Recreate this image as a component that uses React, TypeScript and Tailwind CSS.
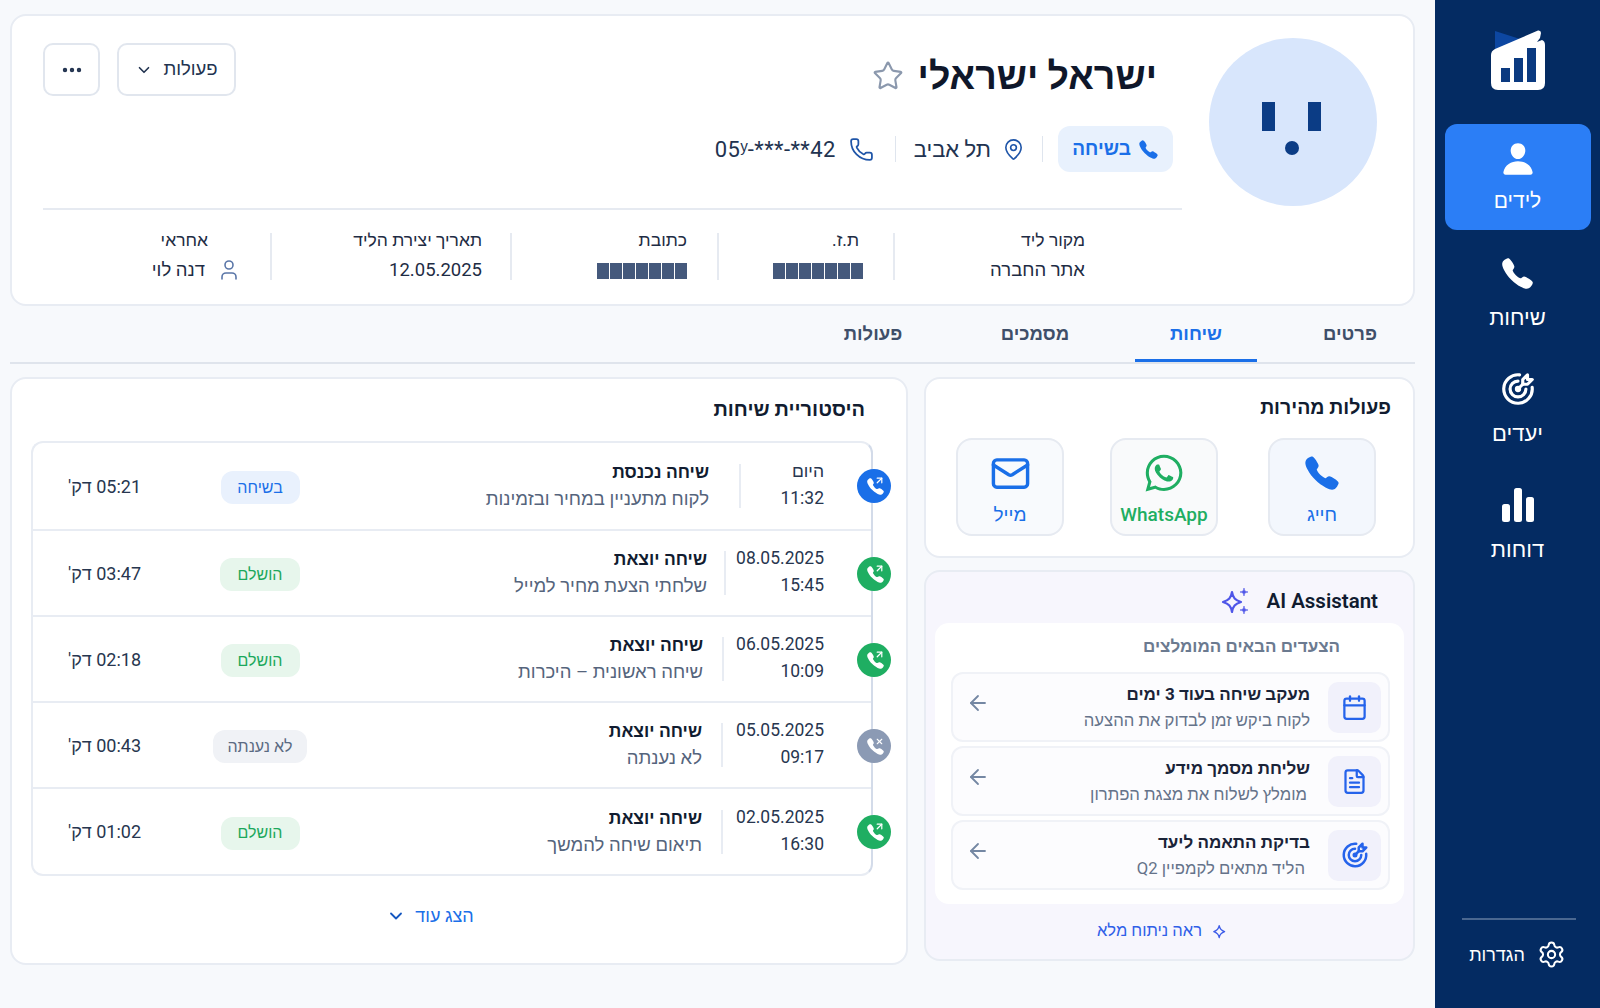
import React from "react";
import { Star, MapPin, Phone, User, ChevronDown, Ellipsis, Settings, ArrowLeft, Calendar, FileText, Mail, ArrowUpRight, X } from "lucide-react";
import { IoCall, IoPerson } from "react-icons/io5";
import { FaWhatsapp } from "react-icons/fa";
import { TbTargetArrow } from "react-icons/tb";

const font = "font-['Roboto','Liberation_Sans',sans-serif]";

function Logo() {
  return (
    <svg width="54" height="60" viewBox="0 0 54 60">
      <path d="M4 1 L29 9 L4 21 Z" fill="#0d47a1" />
      <path d="M0 25 Q0 21 4 19 L47 0.5 Q50 0 50 3 L49 8 L46 12 L51 10 Q54 11 54 15 L54 53 Q54 60 47 60 L7 60 Q0 60 0 53 Z" fill="#ffffff" />
      <rect x="10" y="38" width="9" height="14" fill="#0b3a80" />
      <rect x="23" y="28" width="9" height="24" fill="#0b3a80" />
      <rect x="36" y="18" width="9" height="34" fill="#0b3a80" />
    </svg>
  );
}

function Bars() {
  return (
    <svg width="32" height="34" viewBox="0 0 32 34" fill="#ffffff">
      <rect x="0" y="16" width="8" height="18" rx="2.5" />
      <rect x="12" y="0" width="8" height="34" rx="2.5" />
      <rect x="24" y="9" width="8" height="25" rx="2.5" />
    </svg>
  );
}

function Sparkle({ size = 30, small = true }: { size?: number; small?: boolean }) {
  return (
    <svg width={size} height={size} viewBox="0 0 30 30" fill="none" stroke="currentColor" strokeWidth="2.2" strokeLinejoin="round">
      <path d="M12 6 C13 12 15 14 21 16 C15 18 13 20 12 26 C11 20 9 18 3 16 C9 14 11 12 12 6 Z" />
      {small && <path d="M24 2 C24.4 5 25 5.6 28 6 C25 6.4 24.4 7 24 10 C23.6 7 23 6.4 20 6 C23 5.6 23.6 5 24 2 Z" fill="currentColor" strokeWidth="0.6" />}
      {small && <path d="M24 20 C24.4 23 25 23.6 28 24 C25 24.4 24.4 25 24 28 C23.6 25 23 24.4 20 24 C23 23.6 23.6 23 24 20 Z" fill="currentColor" strokeWidth="0.6" />}
    </svg>
  );
}

function Sidebar() {
  const items = [
    { label: "שיחות", icon: <IoCall size={35} /> },
    { label: "יעדים", icon: <TbTargetArrow size={38} /> },
    { label: "דוחות", icon: <Bars /> },
  ];
  return (
    <aside className="w-[165px] shrink-0 bg-[#042b62] flex flex-col items-center text-white">
      <div className="mt-[30px] h-[60px]"><Logo /></div>
      <div className="mt-[34px] w-[146px] h-[106px] rounded-[12px] bg-[#2b7ef6] flex flex-col items-center pt-[17px]">
        <IoPerson size={36} />
        <span className="mt-[9px] text-[21px] leading-[30px]">לידים</span>
      </div>
      <div className="mt-[21px] flex flex-col items-center">
        {items.map((it) => (
          <div key={it.label} className="flex flex-col items-center w-full h-[116px]">
            <div className="h-[44px] flex items-center justify-center">{it.icon}</div>
            <span className="mt-[8px] text-[22px] leading-[30px]">{it.label}</span>
          </div>
        ))}
      </div>
      <div className="mt-auto w-[114px] border-t-2 border-[#4a6790] mb-[20px] flex items-center justify-center gap-[12px] h-[70px] mr-[-2px] pr-[2px]">
        <Settings size={29} strokeWidth={1.7} />
        <span className="text-[18px]">הגדרות</span>
      </div>
    </aside>
  );
}

function Vsep({ cls }: { cls: string }) {
  return <div className={"w-px bg-[#dfe5ee] " + cls} />;
}

function Blocks({ cls = "" }: { cls?: string }) {
  return (
    <div className={"flex gap-px mt-[12px] h-[16px] " + cls}>
      {[0, 1, 2, 3, 4, 5, 6].map((i) => (
        <div key={i} className="w-[12px] h-[16px] bg-[#45597c]" />
      ))}
    </div>
  );
}

function Meta({ label, cls, children }: { label: string; cls: string; children: React.ReactNode }) {
  return (
    <div className={"h-[47px] " + cls}>
      <div className="text-[17.5px] leading-[22px] text-[#1e2c44] mt-[-4px]">{label}</div>
      <div className="text-[18.5px] leading-[24px] text-[#1e2c44] mt-[7px] whitespace-nowrap">{children}</div>
    </div>
  );
}

function Header() {
  return (
    <section className="h-[292px] rounded-[16px] border-2 border-[#e8ecf3] bg-white flex pr-[36px] pl-[31px]">
      <div className="shrink-0 mt-[22px]">
        <svg width="168" height="168" viewBox="0 0 168 168">
          <circle cx="84" cy="84" r="84" fill="#d8e6fc" />
          <rect x="53" y="64" width="13" height="29" fill="#0b3c85" />
          <rect x="99" y="64" width="13" height="29" fill="#0b3c85" />
          <circle cx="83" cy="110" r="7" fill="#0b3c85" />
        </svg>
      </div>
      <div className="w-[1139px] mr-[27px]">
        <div className="h-[194px] border-b-2 border-[#e6eaf1] flex justify-between items-start">
          <div className="pr-[9px]">
            <div className="flex items-center gap-[14px] pr-[16px] mt-[38px] h-[44px]">
              <h1 className="text-[37.5px] leading-[44px] font-bold text-[#0f172a]">ישראל ישראלי</h1>
              <Star size={32} strokeWidth={1.6} className="text-[#8b98ad]" />
            </div>
            <div className="flex items-center mt-[28px] h-[46px] text-[#223350]">
              <div className="w-[115px] h-[46px] rounded-[12px] bg-[#e8f1fd] flex items-center justify-center gap-[7px] text-[#1a6fe8] text-[19px] font-semibold">
                <IoCall size={21} />
                <span>בשיחה</span>
              </div>
              <Vsep cls="h-[26px] mx-[15px]" />
              <MapPin size={23} strokeWidth={1.7} className="text-[#1f55a8] mr-[2px]" />
              <span className="text-[22px] mr-[11px]">תל אביב</span>
              <Vsep cls="h-[26px] mr-[18px] ml-[21px]" />
              <Phone size={25} strokeWidth={1.7} className="text-[#1f55a8]" />
              <span className="text-[22px] tracking-[0.4px] mr-[13px]" dir="ltr">05ʸ-***-**42</span>
            </div>
          </div>
          <div className="flex gap-[17px] mt-[27px]">
            <button className="w-[119px] h-[53px] rounded-[10px] border-2 border-[#e1e6ee] flex items-center justify-center gap-[10px] text-[18.5px] text-[#223350]">
              <span>פעולות</span>
              <ChevronDown size={18} strokeWidth={2.2} />
            </button>
            <button className="w-[57px] h-[53px] rounded-[10px] border-2 border-[#e1e6ee] flex items-center justify-center text-[#223350]">
              <Ellipsis size={24} strokeWidth={2.4} />
            </button>
          </div>
        </div>
        <div className="flex mt-[23px]">
          <Meta label="מקור ליד" cls="pr-[97px] w-[289px] border-l-2 border-[#e6eaf1]">אתר החברה</Meta>
          <Meta label="ת.ז." cls="pr-[34px] w-[176px] border-l-2 border-[#e6eaf1]"><Blocks cls="mr-[-4px]" /></Meta>
          <Meta label="כתובת" cls="pr-[30px] w-[207px] border-l-2 border-[#e6eaf1]"><Blocks /></Meta>
          <Meta label="תאריך יצירת הליד" cls="pr-[28px] w-[240px] border-l-2 border-[#e6eaf1]">12.05.2025</Meta>
          <Meta label="אחראי" cls="pr-[62px] flex-1">
            <span className="flex items-center gap-[12px] mr-[-33px]">
              <User size={24} strokeWidth={1.6} className="text-[#5a76a8]" />
              <span>דנה לוי</span>
            </span>
          </Meta>
        </div>
      </div>
    </section>
  );
}

function Tabs() {
  const tabs = [
    { t: "פרטים", cls: "w-[130px] text-[#3f4f69] border-transparent" },
    { t: "שיחות", cls: "w-[122px] mr-[28px] text-[#1a6fe8] border-[#1a6fe8]" },
    { t: "מסמכים", cls: "w-[120px] mr-[40px] text-[#3f4f69] border-transparent" },
    { t: "פעולות", cls: "w-[120px] mr-[42px] text-[#3f4f69] border-transparent" },
  ];
  return (
    <nav className="h-[58px] flex border-b-2 border-[#dfe4ec]">
      {tabs.map((x) => (
        <div key={x.t} className={"h-[56px] mb-[-2px] pt-[5px] border-b-[3px] flex items-center justify-center text-[18.5px] font-semibold " + x.cls}>{x.t}</div>
      ))}
    </nav>
  );
}

type Row = { d1: string; d2: string; title: string; sub: string; badge: string; badgeCls: string; dur: string; circle: string; dateCls: string; textCls: string; hCls: string; missed?: boolean };
const rows: Row[] = [
  { d1: "היום", d2: "11:32", title: "שיחה נכנסת", sub: "לקוח מתעניין במחיר ובזמינות", badge: "בשיחה", badgeCls: "w-[79px] bg-[#e9f1fd] text-[#1a6fe8]", dur: "05:21 דק'", circle: "bg-[#1a6fe8]", dateCls: "w-[85px]", textCls: "pr-[30px]", hCls: "h-[88px]" },
  { d1: "08.05.2025", d2: "15:45", title: "שיחה יוצאת", sub: "שלחתי הצעת מחיר למייל", badge: "הושלם", badgeCls: "w-[80px] bg-[#e7f6ec] text-[#1ca85c]", dur: "03:47 דק'", circle: "bg-[#1fae62]", dateCls: "w-[100px]", textCls: "pr-[17px]", hCls: "h-[86px]" },
  { d1: "06.05.2025", d2: "10:09", title: "שיחה יוצאת", sub: "שיחה ראשונית – היכרות", badge: "הושלם", badgeCls: "w-[79px] bg-[#e7f6ec] text-[#1ca85c]", dur: "02:18 דק'", circle: "bg-[#1fae62]", dateCls: "w-[102px]", textCls: "pr-[19px]", hCls: "h-[86px]" },
  { d1: "05.05.2025", d2: "09:17", title: "שיחה יוצאת", sub: "לא נענתה", badge: "לא נענתה", badgeCls: "w-[94px] bg-[#f0f2f6] text-[#5b6a82]", dur: "00:43 דק'", circle: "bg-[#8b9ab4]", dateCls: "w-[103px]", textCls: "pr-[19px]", hCls: "h-[86px]", missed: true },
  { d1: "02.05.2025", d2: "16:30", title: "שיחה יוצאת", sub: "תיאום שיחה להמשך", badge: "הושלם", badgeCls: "w-[79px] bg-[#e7f6ec] text-[#1ca85c]", dur: "01:02 דק'", circle: "bg-[#1fae62]", dateCls: "w-[103px]", textCls: "pr-[19px]", hCls: "h-[85px]" },
];

function CallRow({ r, last }: { r: Row; last: boolean }) {
  return (
    <div className={"relative flex items-center pr-[47px] pl-[35px] " + r.hCls + " " + (last ? "" : "border-b-2 border-[#e8ecf3]")}>
      <div className={"absolute -right-[20px] top-[26px] w-[34px] h-[34px] rounded-full flex items-center justify-center text-white " + r.circle}>
        <IoCall size={19} className="ml-[3px]" />
        {r.missed ? (
          <X size={9} strokeWidth={3} className="absolute top-[8px] right-[7px]" />
        ) : (
          <ArrowUpRight size={11} strokeWidth={2.6} className="absolute top-[6px] right-[6px]" />
        )}
      </div>
      <div className={"h-[44px] border-l-2 border-[#e8ecf3] text-[17.5px] leading-[27px] text-[#27364f] shrink-0 " + r.dateCls}>
        <div className="mt-[-6px]">{r.d1}</div>
        <div>{r.d2}</div>
      </div>
      <div className={"flex-1 " + r.textCls}>
        <div className="text-[17.5px] leading-[27px] font-bold text-[#111c30]">{r.title}</div>
        <div className="text-[18.5px] leading-[27px] text-[#55647c]">{r.sub}</div>
      </div>
      <div className="w-[94px] flex justify-center ml-[70px] mt-[3px]">
        <div className={"h-[33px] rounded-[12px] flex items-center justify-center text-[16px] font-medium " + r.badgeCls}>{r.badge}</div>
      </div>
      <div className="w-[75px] text-[18px] text-[#27364f] text-left whitespace-nowrap">{r.dur}</div>
    </div>
  );
}

function History() {
  return (
    <section className="flex-1 h-[588px] rounded-[16px] border-2 border-[#e8ecf3] bg-white pt-[15px]">
      <h2 className="mr-[41px] text-[20px] leading-[30px] font-bold text-[#111c30]">היסטוריית שיחות</h2>
      <div className="mr-[33px] ml-[19px] mt-[17px] rounded-[12px] border-2 border-[#e8ecf3] border-r-[#d3dbe9]">
        {rows.map((r, i) => <CallRow key={i} r={r} last={i === rows.length - 1} />)}
      </div>
      <div className="mt-[26px] flex items-center justify-center gap-[9px] text-[#1a6fe8] text-[18px] mr-[58px]">
        <span>הצג עוד</span>
        <ChevronDown size={20} strokeWidth={2.2} className="text-[#1557c0]" />
      </div>
    </section>
  );
}

function QuickBtn({ cls, color, icon, label }: { cls: string; color: string; icon: React.ReactNode; label: string }) {
  return (
    <div className={"w-[108px] h-[98px] rounded-[16px] border-2 border-[#e6eaf1] flex flex-col items-center pt-[12px] " + cls + " " + color}>
      <div className="h-[42px] flex items-center justify-center">{icon}</div>
      <span className="mt-[7px] text-[19px] leading-[28px] font-medium">{label}</span>
    </div>
  );
}

function Quick() {
  return (
    <section className="h-[181px] rounded-[16px] border-2 border-[#e8ecf3] bg-white pt-[14px] pr-[22px]">
      <h2 className="text-[19.5px] leading-[30px] font-bold text-[#111c30]">פעולות מהירות</h2>
      <div className="flex mt-[15px] pr-[15px] gap-[50px]">
        <QuickBtn cls="bg-[#f3f7fd]" color="text-[#1a6fe8]" icon={<IoCall size={38} />} label="חייג" />
        <QuickBtn cls="bg-[#f9fafb]" color="text-[#1fae62]" icon={<FaWhatsapp size={42} />} label="WhatsApp" />
        <QuickBtn cls="bg-[#f8fafd] mr-[-4px]" color="text-[#1a6fe8]" icon={<Mail size={41} strokeWidth={2} />} label="מייל" />
      </div>
    </section>
  );
}

function Suggestion({ icon, title, sub, subCls }: { icon: React.ReactNode; title: string; sub: string; subCls: string }) {
  return (
    <div className="h-[70px] rounded-[12px] border-2 border-[#f0f2f7] bg-[#fcfcfe] flex items-center pr-[7px] pl-[13px]">
      <div className="w-[53px] h-[51px] rounded-[10px] bg-[#f1f1fb] flex items-center justify-center text-[#2563eb]">{icon}</div>
      <div className="flex-1 mr-[18px]">
        <div className="text-[17px] leading-[27px] font-bold text-[#1a2338] mt-[-1px]">{title}</div>
        <div className={"text-[16.7px] leading-[25px] text-[#65738a] " + subCls}>{sub}</div>
      </div>
      <ArrowLeft size={24} strokeWidth={1.8} className="text-[#7487a3] mb-[8px]" />
    </div>
  );
}

function AI() {
  return (
    <section className="mt-[12px] h-[391px] rounded-[16px] border-2 border-[#e8ecf3] bg-[#f7f6fd] px-[9px] pt-[13px]">
      <div className="flex items-center gap-[16px] h-[32px] pr-[26px]">
        <span className="text-[20.5px] font-semibold text-[#111c30]" dir="ltr">AI Assistant</span>
        <span className="text-[#4f56e8] flex"><Sparkle /></span>
      </div>
      <div className="mt-[6px] h-[281px] rounded-[14px] bg-white pr-[14px] pl-[16px] pt-[11px]">
        <div className="text-[17px] leading-[24px] font-semibold text-[#6b7a90] pr-[50px]">הצעדים הבאים המומלצים</div>
        <div className="mt-[14px] flex flex-col gap-[4px]">
          <Suggestion icon={<Calendar size={27} strokeWidth={2} />} title="מעקב שיחה בעוד 3 ימים" sub="לקוח ביקש זמן לבדוק את ההצעה" subCls="" />
          <Suggestion icon={<FileText size={27} strokeWidth={2} />} title="שליחת מסמך מידע" sub="מומלץ לשלוח את מצגת הפתרון" subCls="pr-[3px]" />
          <Suggestion icon={<TbTargetArrow size={30} />} title="בדיקת התאמה ליעד" sub="הליד מתאים לקמפיין Q2" subCls="pr-[5px]" />
        </div>
      </div>
      <div className="mt-[15px] flex items-center justify-center gap-[10px] text-[#2f5fe8] text-[16.5px] mr-[12px]">
        <span className="flex text-[#3d5ce8]"><Sparkle size={18} small={false} /></span>
        <span>ראה ניתוח מלא</span>
      </div>
    </section>
  );
}

export default function App() {
  return (
    <div dir="rtl" className={"flex w-[1600px] h-[1008px] overflow-hidden bg-[#f7f9fc] " + font}>
      <Sidebar />
      <main className="flex-1 pt-[14px] pl-[10px] pr-[20px]">
        <Header />
        <Tabs />
        <div className="flex gap-[16px] mt-[13px]">
          <div className="w-[491px] shrink-0">
            <Quick />
            <AI />
          </div>
          <History />
        </div>
      </main>
    </div>
  );
}
